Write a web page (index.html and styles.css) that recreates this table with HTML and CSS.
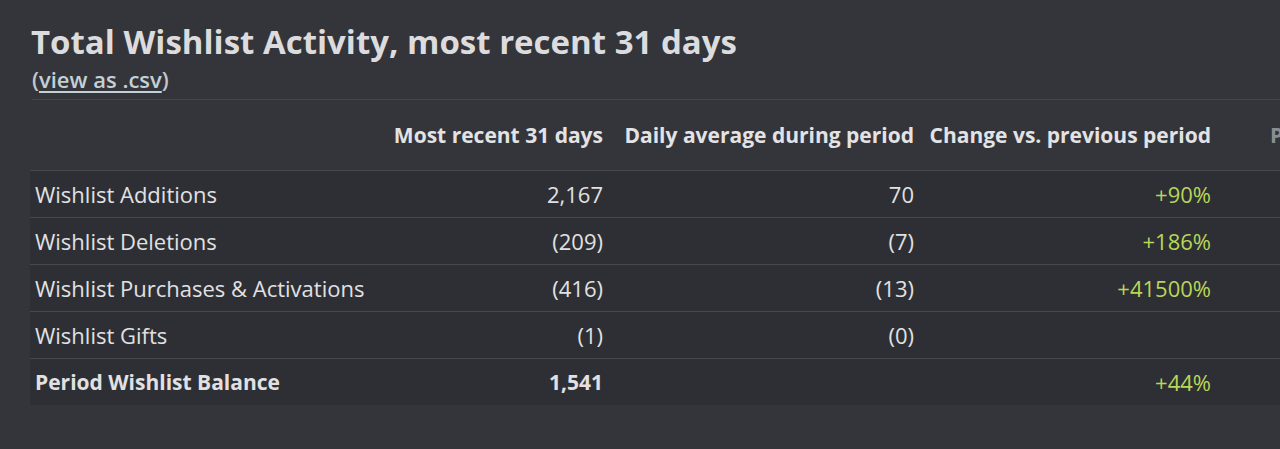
FILE: index.html
```html
<!DOCTYPE html>
<html lang="en">
<head>
  <meta charset="UTF-8">
  <title>Total Wishlist Activity</title>
  <link rel="stylesheet" href="styles.css">
</head>
<body>
  <section class="report">
    <h2 class="report-title">Total Wishlist Activity, most recent 31 days</h2>
    <div class="csv-link">(<a href="#">view as .csv</a>)</div>

    <table class="stats">
      <colgroup>
        <col class="w-label">
        <col class="w-recent">
        <col class="w-daily">
        <col class="w-change">
        <col class="w-prev">
      </colgroup>
      <thead>
        <tr>
          <th class="label-col"></th>
          <th class="num">Most recent 31 days</th>
          <th class="num">Daily average during period</th>
          <th class="num">Change vs. previous period</th>
          <th class="col-prev">Previous period</th>
        </tr>
      </thead>
      <tbody>
        <tr>
          <td class="label-col">Wishlist Additions</td>
          <td class="num">2,167</td>
          <td class="num">70</td>
          <td class="num up">+90%</td>
          <td></td>
        </tr>
        <tr>
          <td class="label-col">Wishlist Deletions</td>
          <td class="num">(209)</td>
          <td class="num">(7)</td>
          <td class="num up">+186%</td>
          <td></td>
        </tr>
        <tr>
          <td class="label-col">Wishlist Purchases &amp; Activations</td>
          <td class="num">(416)</td>
          <td class="num">(13)</td>
          <td class="num up">+41500%</td>
          <td></td>
        </tr>
        <tr>
          <td class="label-col">Wishlist Gifts</td>
          <td class="num">(1)</td>
          <td class="num">(0)</td>
          <td class="num up"></td>
          <td></td>
        </tr>
        <tr class="total">
          <td class="label-col">Period Wishlist Balance</td>
          <td class="num">1,541</td>
          <td class="num"></td>
          <td class="num up">+44%</td>
          <td></td>
        </tr>
      </tbody>
    </table>
  </section>
</body>
</html>
```

FILE: styles.css
```css
body {
  margin: 0;
  padding: 0;
  background: #34353a;
  color: #e1e1e3;
  font-family: "Open Sans", "Noto Sans", sans-serif;
  overflow: hidden;
}

.report {
  padding: 20px 0 0 30px;
  width: 1400px;
}

.report-title {
  margin: 0 0 0 1px;
  font-size: 33px;
  font-weight: 700;
  line-height: 44px;
  color: #dcdcde;
}

.csv-link {
  margin-left: 2px;
  padding-top: 3px;
  font-size: 22px;
  font-weight: 600;
  line-height: 24px;
  color: #c4c6c8;
  padding-bottom: 8px;
  border-bottom: 1px solid #45464b;
}
.csv-link a {
  color: #c3d0d6;
  text-decoration: underline;
  text-underline-offset: 3px;
}

.stats {
  border-collapse: collapse;
  table-layout: fixed;
  width: 1385px;
  font-size: 22px;
}

.w-label { width: 357px; }
.w-recent { width: 220px; }
.w-daily { width: 311px; }
.w-change { width: 297px; }
.w-prev { width: 200px; }

.stats th {
  height: 70px;
  font-size: 21px;
  font-weight: 700;
  color: #e3e3e5;
  padding: 0 4px;
  white-space: nowrap;
}

.stats td {
  height: 46px;
  padding: 0 4px 0 5px;
  background: #2e2f34;
  border-top: 1px solid #47484d;
  white-space: nowrap;
}

.label-col { text-align: left; }

.col-prev {
  text-align: left;
  padding-left: 55px !important;
  color: #8c8d91 !important;
}

.num { text-align: right; }
.up { color: #b8d658; }

.total td {
  font-size: 21px;
  font-weight: 700;
}
.total td.up {
  font-size: 22px;
  font-weight: 400;
}
```
